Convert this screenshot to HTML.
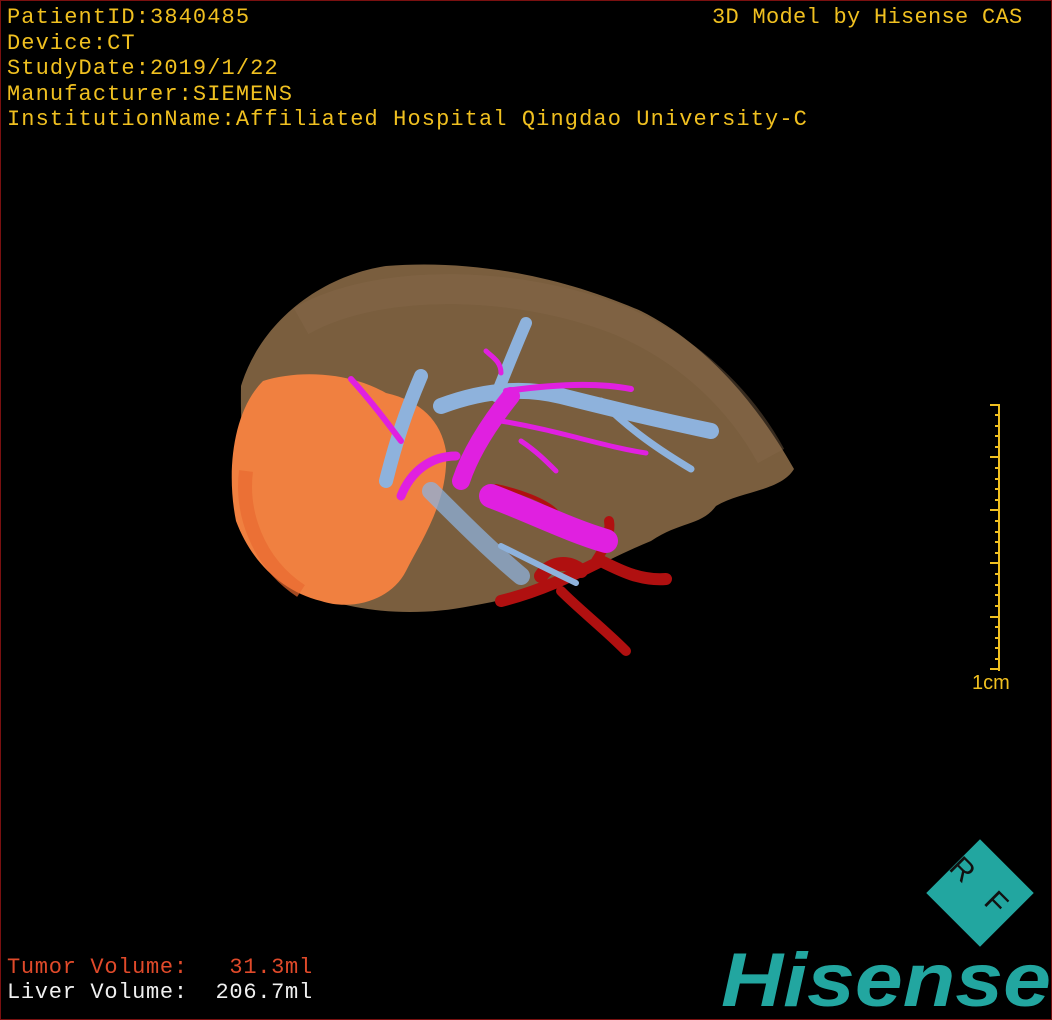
<!DOCTYPE html>
<html><head><meta charset="utf-8"><style>
html,body{margin:0;padding:0;background:#000;}
.wrap{position:relative;width:1052px;height:1020px;background:#000;overflow:hidden;box-sizing:border-box;border:1px solid #7a1010;}
.t{position:absolute;font-family:"Liberation Mono",monospace;font-size:22px;color:#f0c020;letter-spacing:1.1px;white-space:pre;line-height:25.5px;}
</style></head><body><div class="wrap">
<div class="t" style="left:6px;top:4px">PatientID:3840485<br>Device:CT<br>StudyDate:2019/1/22<br>Manufacturer:SIEMENS<br>InstitutionName:Affiliated Hospital Qingdao University-C</div>
<div class="t" style="left:711px;top:4px;letter-spacing:0.3px">3D Model by Hisense CAS</div>
<div class="t" style="left:6px;top:954px;color:#e04a2a;letter-spacing:0.7px">Tumor Volume:   31.3ml</div>
<div class="t" style="left:6px;top:979px;color:#f0f0f0;letter-spacing:0.7px">Liver Volume:  206.7ml</div>
<div class="t" style="left:971px;top:670px;font-family:'Liberation Sans',sans-serif;font-size:20px;letter-spacing:0">1cm</div>
<svg width="1052" height="1020" style="position:absolute;left:0;top:0" xmlns="http://www.w3.org/2000/svg">
<g stroke="#f0c020" stroke-width="2">
<line x1="998" y1="403" x2="998" y2="670"/>
<line x1="989" y1="404" x2="999" y2="404"/><line x1="989" y1="456" x2="999" y2="456"/><line x1="989" y1="509" x2="999" y2="509"/><line x1="989" y1="562" x2="999" y2="562"/><line x1="989" y1="616" x2="999" y2="616"/><line x1="989" y1="668" x2="999" y2="668"/>
<line x1="994" y1="414" x2="999" y2="414"/><line x1="994" y1="425" x2="999" y2="425"/><line x1="994" y1="435" x2="999" y2="435"/><line x1="994" y1="446" x2="999" y2="446"/>
<line x1="994" y1="467" x2="999" y2="467"/><line x1="994" y1="478" x2="999" y2="478"/><line x1="994" y1="488" x2="999" y2="488"/><line x1="994" y1="499" x2="999" y2="499"/>
<line x1="994" y1="520" x2="999" y2="520"/><line x1="994" y1="531" x2="999" y2="531"/><line x1="994" y1="541" x2="999" y2="541"/><line x1="994" y1="552" x2="999" y2="552"/>
<line x1="994" y1="573" x2="999" y2="573"/><line x1="994" y1="584" x2="999" y2="584"/><line x1="994" y1="594" x2="999" y2="594"/><line x1="994" y1="605" x2="999" y2="605"/>
<line x1="994" y1="626" x2="999" y2="626"/><line x1="994" y1="637" x2="999" y2="637"/><line x1="994" y1="647" x2="999" y2="647"/><line x1="994" y1="658" x2="999" y2="658"/>
</g>
<path d="M240,385 C260,320 320,275 385,265 C470,258 560,275 640,310 C710,345 760,410 793,468 C780,490 740,490 715,505 C700,525 680,520 650,540 C600,560 560,590 470,605 C420,615 370,612 330,600 C270,580 238,520 240,385 Z" fill="#7a5e3e"/>
<path d="M300,320 C380,275 520,280 620,320 C690,350 740,400 770,455" fill="none" stroke="#86694a" stroke-width="30" opacity="0.4"/>
<path d="M262,380 C300,368 350,372 385,392 C420,400 440,420 445,450 C448,500 420,540 405,570 C390,600 350,610 320,600 C280,590 250,560 235,520 C225,470 232,410 262,380 Z" fill="#f08040"/>
<path d="M245,470 C240,510 255,560 300,590" fill="none" stroke="#e86a30" stroke-width="14" opacity="0.7"/>
<g fill="none" stroke="#b01010" stroke-linecap="round">
<path d="M500,600 C540,590 570,575 600,560 C620,570 640,580 665,578" stroke-width="12"/>
<path d="M560,590 C580,610 600,625 625,650" stroke-width="10"/>
<path d="M595,560 C605,545 610,530 608,520" stroke-width="10"/>
<path d="M495,485 C520,490 545,500 555,510" stroke-width="4"/>
<path d="M540,575 C550,560 570,560 580,570" stroke-width="14"/>
</g>
<g fill="none" stroke="#8eb2dc" stroke-linecap="round">
<path d="M385,480 C395,440 405,410 420,375" stroke-width="14"/>
<path d="M440,405 C480,390 520,385 560,395 C600,405 640,415 710,430" stroke-width="16"/>
<path d="M495,395 C505,370 515,345 525,322" stroke-width="12"/>
<path d="M600,400 C630,430 660,450 690,468" stroke-width="7"/>
<path d="M430,490 C460,520 490,550 520,575" stroke-width="18" opacity="0.75"/>
<path d="M500,545 C530,560 550,570 575,582" stroke-width="6"/>
</g>
<g fill="none" stroke="#e020e0" stroke-linecap="round">
<path d="M490,495 C530,510 570,530 605,540" stroke-width="24"/>
<path d="M460,480 C470,450 490,420 510,395" stroke-width="18"/>
<path d="M455,455 C430,455 410,470 400,495" stroke-width="9"/>
<path d="M400,440 C385,420 370,400 350,378" stroke-width="6"/>
<path d="M505,390 C540,385 590,380 630,388" stroke-width="6"/>
<path d="M500,420 C560,430 600,445 645,452" stroke-width="5"/>
<path d="M500,372 C500,360 490,355 485,350" stroke-width="5"/>
<path d="M520,440 C535,450 545,460 555,470" stroke-width="5"/>
</g>
<g transform="translate(979,892) rotate(45)">
<rect x="-38" y="-38" width="76" height="76" fill="#22a6a0"/>
</g>
<text x="950" y="880" font-family="Liberation Sans,sans-serif" font-size="30" fill="#111" transform="rotate(45 963 870)">R</text>
<text x="985" y="912" font-family="Liberation Sans,sans-serif" font-size="30" fill="#111" transform="rotate(45 995 903)">F</text>
<text x="720" y="1005" font-family="Liberation Sans,sans-serif" font-weight="bold" font-style="italic" font-size="76" fill="#22a6a0" textLength="330" lengthAdjust="spacingAndGlyphs">Hisense</text>
</svg>
</div></body></html>
